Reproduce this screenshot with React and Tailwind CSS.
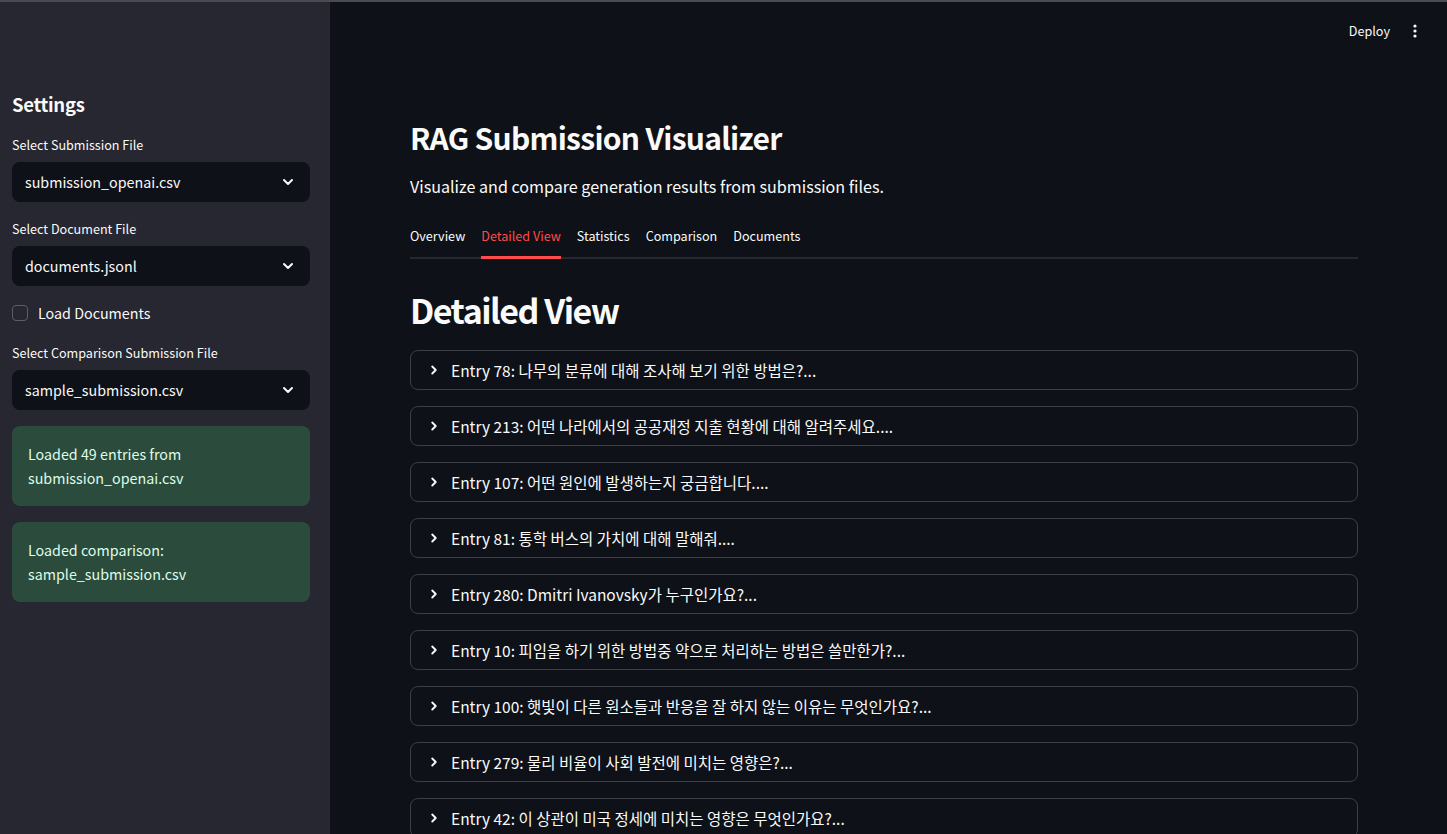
import React from "react";

const FONT = { fontFamily: '"Noto Sans CJK KR", "Noto Sans", sans-serif' };

function Chevron({ className = "" }) {
  return (
    <svg className={className} width="16" height="16" viewBox="0 0 24 24" fill="none" stroke="currentColor" strokeWidth="3" strokeLinecap="round" strokeLinejoin="round">
      <path d="M6 9l6 6 6-6" />
    </svg>
  );
}

function ChevronRight() {
  return (
    <svg width="14" height="14" viewBox="0 0 24 24" fill="none" stroke="currentColor" strokeWidth="3.2" strokeLinecap="round" strokeLinejoin="round">
      <path d="M9 6l6 6-6 6" />
    </svg>
  );
}

function Select({ label, value, top }) {
  return (
    <div className={top}>
      <div className="text-[12.6px] leading-[20px] text-[#fafafa] mb-[7px]">{label}</div>
      <div className="h-[40px] rounded-[8px] bg-[#0e1117] flex items-center justify-between pl-[13px] pr-[14px]">
        <span className="text-[14.3px] text-[#fafafa]">{value}</span>
        <Chevron className="text-[#fafafa]" />
      </div>
    </div>
  );
}

const entries = [
  "Entry 78: 나무의 분류에 대해 조사해 보기 위한 방법은?...",
  "Entry 213: 어떤 나라에서의 공공재정 지출 현황에 대해 알려주세요....",
  "Entry 107: 어떤 원인에 발생하는지 궁금합니다....",
  "Entry 81: 통학 버스의 가치에 대해 말해줘....",
  "Entry 280: Dmitri Ivanovsky가 누구인가요?...",
  "Entry 10: 피임을 하기 위한 방법중 약으로 처리하는 방법은 쓸만한가?...",
  "Entry 100: 햇빛이 다른 원소들과 반응을 잘 하지 않는 이유는 무엇인가요?...",
  "Entry 279: 물리 비율이 사회 발전에 미치는 영향은?...",
  "Entry 42: 이 상관이 미국 정세에 미치는 영향은 무엇인가요?...",
];

export default function App() {
  return (
    <div style={FONT} className="w-[1447px] h-[834px] overflow-hidden bg-[#0e1117] flex flex-col">
      <div className="h-[2px] bg-[#4a4b50] shrink-0" />
      <div className="flex flex-1 min-h-0">
        {/* Sidebar */}
        <aside className="w-[330px] shrink-0 bg-[#262730] pl-[12px] pr-[20px] pt-[88px]">
          <h2 className="text-[18.5px] leading-[28px] font-bold tracking-[-0.3px] text-[#fafafa]">Settings</h2>
          <Select label="Select Submission File" value="submission_openai.csv" top="mt-[17px]" />
          <Select label="Select Document File" value="documents.jsonl" top="mt-[17px]" />
          <div className="mt-[17px] flex items-center gap-[10px] h-[20px]">
            <div className="w-[16px] h-[16px] rounded-[4px] border border-[#5a5c66]" />
            <span className="text-[14.3px] text-[#fafafa]">Load Documents</span>
          </div>
          <Select label="Select Comparison Submission File" value="sample_submission.csv" top="mt-[20px]" />
          <div className="mt-[16px] h-[80px] rounded-[8px] bg-[#2b4c3d] px-[16px] pt-[16px] text-[14.3px] leading-[24px] text-[#dffde9]">
            Loaded 49 entries from<br />submission_openai.csv
          </div>
          <div className="mt-[16px] h-[80px] rounded-[8px] bg-[#2b4c3d] px-[16px] pt-[16px] text-[14.3px] leading-[24px] text-[#dffde9]">
            Loaded comparison:<br />sample_submission.csv
          </div>
        </aside>

        {/* Main */}
        <main className="flex-1 relative text-[#fafafa]">
          <div className="absolute top-[19px] right-[30px] flex items-center gap-[23px]">
            <span className="text-[12.6px] leading-[20px]">Deploy</span>
            <svg width="4" height="14" viewBox="0 0 4 14" fill="#fafafa">
              <circle cx="2" cy="2" r="1.6" />
              <circle cx="2" cy="7" r="1.6" />
              <circle cx="2" cy="12" r="1.6" />
            </svg>
          </div>
          <div className="ml-[80px] w-[948px] pt-[114px]">
            <h1 className="text-[30px] leading-[42px] font-bold tracking-[-0.72px]">RAG Submission Visualizer</h1>
            <p className="mt-[16px] text-[16.1px] leading-[24px]">Visualize and compare generation results from submission files.</p>
            <div className="mt-[24px] flex gap-[16px] border-b-2 border-[#262730] h-[37px]">
              {["Overview", "Detailed View", "Statistics", "Comparison", "Documents"].map((t) => (
                <div
                  key={t}
                  className={
                    t === "Detailed View"
                      ? "text-[12.6px] leading-[20px] pt-[4px] text-[#ff4b4b] border-b-[3px] border-[#ff4b4b] -mb-[2px]"
                      : "text-[12.6px] leading-[20px] pt-[4px] text-[#fafafa]"
                  }
                >
                  {t}
                </div>
              ))}
            </div>
            <h2 className="mt-[28px] text-[34px] leading-[46px] font-bold tracking-[-1.5px]">Detailed View</h2>
            <div className="mt-[17px] flex flex-col gap-[16px]">
              {entries.map((e) => (
                <div key={e} className="h-[40px] rounded-[8px] border border-[#3d3f47] flex items-center pl-[16px] gap-[10px]">
                  <ChevronRight />
                  <span className="text-[15.5px] leading-[20px]">{e}</span>
                </div>
              ))}
            </div>
          </div>
        </main>
      </div>
    </div>
  );
}
